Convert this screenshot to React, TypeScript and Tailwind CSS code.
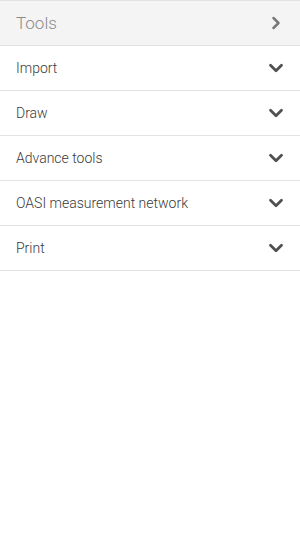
import { ChevronDown, ChevronRight } from "lucide-react";

const items = ["Import", "Draw", "Advance tools", "OASI measurement network", "Print"];

const App = () => {
  return (
    <div className="w-[300px] h-[550px] bg-white font-['Roboto',sans-serif]">
      <div className="h-[46px] flex items-center justify-between pl-4 pr-[14px] bg-[#f4f4f4] border-y border-[#e2e2e2]">
        <span className="text-[17px] text-[#8a8a8a] font-light pt-[2px]">Tools</span>
        <ChevronRight className="w-[20px] h-[20px] text-[#7a7a7a]" strokeWidth={3} />
      </div>
      {items.map((item) => (
        <div
          key={item}
          className="h-[45px] flex items-center justify-between pl-4 pr-[13px] border-b border-[#e2e2e2]"
        >
          <span className="text-[14px] text-[#3a3a3a] font-light">{item}</span>
          <ChevronDown className="w-[22px] h-[22px] text-[#505050]" strokeWidth={3} />
        </div>
      ))}
    </div>
  );
};

export default App;
